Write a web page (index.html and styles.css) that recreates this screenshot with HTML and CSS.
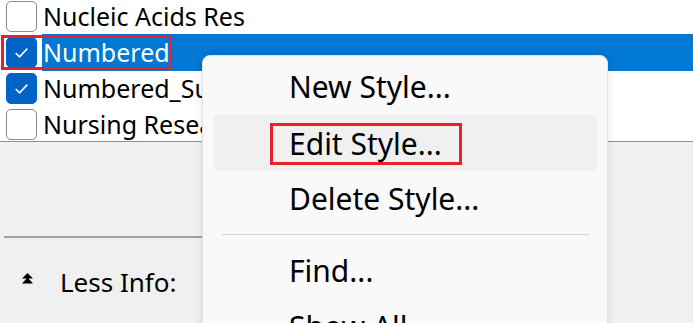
FILE: index.html
```html
<!DOCTYPE html>
<html lang="en">
<head>
  <meta charset="UTF-8" />
  <title>Styles</title>
  <link rel="stylesheet" href="styles.css">
</head>
<body>
  <div class="style-list">
    <div class="row first">
      <span class="check"></span>
      <span class="label">Nucleic Acids Res</span>
    </div>
    <div class="row selected">
      <span class="check on"><svg viewBox="0 0 30 30"><path d="M9 15.5l4 4 8-8.5" /></svg></span>
      <span class="label">Numbered</span>
      <span class="mark"></span>
    </div>
    <div class="row">
      <span class="check on"><svg viewBox="0 0 30 30"><path d="M9 15.5l4 4 8-8.5" /></svg></span>
      <span class="label">Numbered_Superscripted</span>
    </div>
    <div class="row">
      <span class="check"></span>
      <span class="label">Nursing Research</span>
    </div>
  </div>

  <div class="bottom">
    <hr class="divider">
    <div class="info">
      <svg class="less-icon" viewBox="0 0 10 10"><path d="M5 0L10 5H0Z M5 4.2L10 9.5H0Z" /></svg>
      <span>Less Info:</span>
    </div>
  </div>

  <div class="menu">
    <div class="item">New Style...</div>
    <div class="item hover"><span class="mark-box">Edit Style...</span></div>
    <div class="item">Delete Style...</div>
    <div class="sep"></div>
    <div class="item">Find...</div>
    <div class="item">Show All</div>
  </div>
</body>
</html>
```

FILE: styles.css
```css
body {
  margin: 0;
  width: 693px;
  height: 323px;
  overflow: hidden;
  position: relative;
  background: #f0f0f0;
  font-family: 'Noto Sans', 'Open Sans', sans-serif;
  color: #000;
}
.style-list {
  height: 141px;
  background: #fff;
  border-bottom: 1px solid #8a9098;
  overflow: hidden;
}
.row {
  position: relative;
  height: 36px;
  display: flex;
  align-items: center;
  font-size: 25px;
}
.row.first {
  margin-top: -2px;
}
.check {
  width: 29px;
  height: 29px;
  margin-left: 6px;
  margin-right: 5px;
  border: 1px solid #8a8a8a;
  border-radius: 5px;
  background: #fff;
  flex: none;
}
.check.on {
  background: #0063c6;
  border-color: #0063c6;
}
.check svg {
  width: 29px;
  height: 29px;
  display: block;
}
.check svg path {
  fill: none;
  stroke: #fff;
  stroke-width: 1.6;
}
.label {
  white-space: nowrap;
  padding-left: 1px;
  line-height: 36px;
}
.selected .label {
  background: #0078d4;
  color: #fff;
  flex: 1;
  height: 37px;
}
.selected .mark {
  position: absolute;
  left: 1px;
  top: 1px;
  width: 165px;
  height: 29px;
  border: 3px solid #e8202a;
}
.bottom {
  padding-top: 94px;
}
.divider {
  margin: 0 0 0 4px;
  width: 198px;
  border: none;
  border-top: 2px solid #a0a0a0;
}
.info {
  display: flex;
  align-items: center;
  margin-top: 26px;
  font-size: 26px;
}
.less-icon {
  width: 11px;
  height: 11px;
  margin-left: 22px;
  margin-right: 27px;
  margin-top: -8px;
  fill: #000;
}
.menu {
  position: absolute;
  left: 202px;
  top: 55px;
  width: 383px;
  height: 320px;
  padding: 3px 10px 0 11px;
  background: #f9f9f9;
  border: 1px solid #e2e2e2;
  border-radius: 8px;
  box-shadow: 0 0 10px rgba(0,0,0,0.10);
  font-size: 30px;
}
.item {
  height: 56px;
  line-height: 56px;
  padding-left: 75px;
  border-radius: 4px;
  white-space: nowrap;
}
.item.hover {
  background: #f0f0f0;
}
.mark-box {
  display: inline-block;
  margin-left: -19px;
  margin-top: -3px;
  padding: 0 17px 0 16px;
  height: 36px;
  line-height: 36px;
  border: 3px solid #e8202a;
  vertical-align: middle;
}
.sep {
  height: 1px;
  margin: 7px 8px 8px;
  background: #d6d6d6;
}
```
